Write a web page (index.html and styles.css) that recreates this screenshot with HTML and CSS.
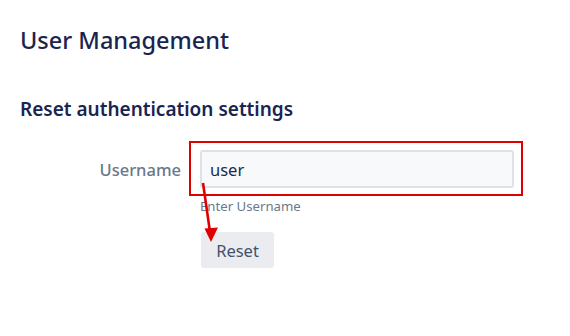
FILE: index.html
```html
<!DOCTYPE html>
<html>
<head>
<meta charset="utf-8">
<link rel="stylesheet" href="styles.css">
</head>
<body>
<div class="page">
  <h1 class="title">User Management</h1>
  <h2 class="subtitle">Reset authentication settings</h2>
  <form class="form">
    <div class="row">
      <label class="label" for="username">Username</label>
      <div class="field">
        <div class="input-wrap">
          <input id="username" class="input" type="text" value="user">
          <div class="highlight"></div>
        </div>
        <div class="hint">Enter Username</div>
        <button type="button" class="btn">Reset</button>
        <svg class="arrow" width="24" height="66" viewBox="0 0 24 66">
          <line x1="3" y1="3" x2="10" y2="52" stroke="#e00000" stroke-width="2.6"/>
          <polygon points="4.5,48.5 18,47.5 11,62" fill="#e00000"/>
        </svg>
      </div>
    </div>
  </form>
</div>
</body>
</html>
```
FILE: styles.css
```css
html, body {
  margin: 0;
  padding: 0;
  background: #ffffff;
}
body {
  font-family: "Noto Sans", "Open Sans", sans-serif;
  color: #172b4d;
}
.page {
  padding: 24px 20px 0 20px;
}
.title {
  margin: 0;
  font-size: 23.5px;
  font-weight: 500;
  line-height: 32px;
  color: #1a2450;
}
.subtitle {
  margin: 40px 0 0 0;
  font-size: 19px;
  font-weight: 600;
  line-height: 26px;
  color: #1a2450;
}
.form {
  margin-top: 28px;
}
.row {
  display: flex;
  align-items: flex-start;
}
.label {
  width: 161px;
  text-align: right;
  padding-top: 8px;
  font-size: 16.5px;
  line-height: 24px;
  color: #6b778c;
  font-weight: 500;
}
.field {
  position: relative;
  margin-left: 19px;
  display: flex;
  flex-direction: column;
  align-items: flex-start;
}
.input-wrap {
  position: relative;
}
.input {
  display: block;
  box-sizing: border-box;
  width: 314px;
  height: 38px;
  margin: 0;
  padding: 0 8px;
  background: #f8f9fb;
  border: 2px solid #dfe1e6;
  border-radius: 3px;
  font-family: inherit;
  font-size: 16.5px;
  color: #172b4d;
  outline: none;
}
.highlight {
  position: absolute;
  left: -11px;
  top: -9px;
  box-sizing: border-box;
  width: 334px;
  height: 55px;
  border: 2px solid #e00000;
  pointer-events: none;
}
.hint {
  margin-top: 10px;
  font-size: 13.2px;
  line-height: 16px;
  color: #6b778c;
}
.btn {
  margin-top: 18px;
  margin-left: 1px;
  width: 73px;
  height: 36px;
  border: none;
  border-radius: 3px;
  background: #ebecf0;
  font-family: inherit;
  font-size: 16.5px;
  color: #42526e;
  padding: 0;
}
.arrow {
  position: absolute;
  left: 0;
  top: 30px;
}
```
